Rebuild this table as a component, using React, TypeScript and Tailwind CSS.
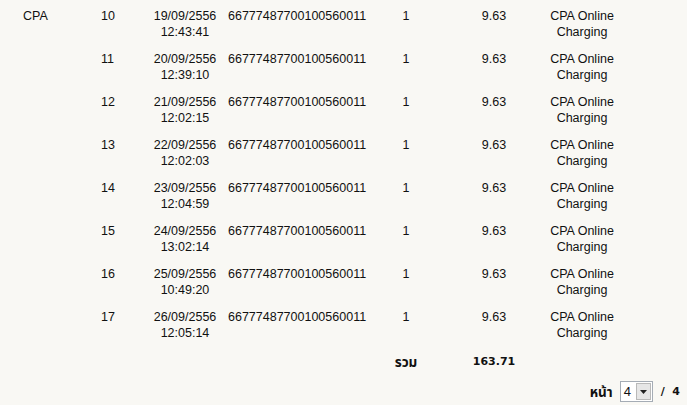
const rows = [
  { no: "10", date: "19/09/2556", time: "12:43:41" },
  { no: "11", date: "20/09/2556", time: "12:39:10" },
  { no: "12", date: "21/09/2556", time: "12:02:15" },
  { no: "13", date: "22/09/2556", time: "12:02:03" },
  { no: "14", date: "23/09/2556", time: "12:04:59" },
  { no: "15", date: "24/09/2556", time: "13:02:14" },
  { no: "16", date: "25/09/2556", time: "10:49:20" },
  { no: "17", date: "26/09/2556", time: "12:05:14" },
];

const grid = "grid grid-cols-[95px_50px_80px_145px_72px_104px_72px_1fr]";
const boldFont = { fontFamily: '"DejaVu Sans", "Noto Sans Thai", sans-serif' };

function Row({ first, no, date, time }: { first: boolean; no: string; date: string; time: string }) {
  return (
    <div className={`${grid} h-[43px] pt-[8px]`}>
      <div className="pl-[23px]">{first ? "CPA" : ""}</div>
      <div className="pl-[6px]">{no}</div>
      <div className="text-center">
        {date}
        <br />
        {time}
      </div>
      <div className="pl-[3px]">66777487700100560011</div>
      <div className="text-center">1</div>
      <div className="text-center">9.63</div>
      <div className="text-center">
        CPA Online
        <br />
        Charging
      </div>
      <div />
    </div>
  );
}

export default function App() {
  return (
    <div
      className="w-[687px] h-[405px] bg-[#f9f8f4] text-[#111] text-[12.5px] leading-[16px] overflow-hidden"
      style={{ fontFamily: '"Liberation Sans", "Noto Sans Thai", "DejaVu Sans", sans-serif' }}
    >
      {rows.map((r, i) => (
        <Row key={r.no} first={i === 0} {...r} />
      ))}
      <div className={`${grid} pt-[10px] font-bold text-[11px]`} style={boldFont}>
        <div />
        <div />
        <div />
        <div />
        <div className="text-center text-[13.5px]">รวม</div>
        <div className="text-center">163.71</div>
        <div />
        <div />
      </div>
      <div className="flex items-center justify-end pr-[7px] mt-[11px] font-bold text-[11px]" style={boldFont}>
        <span className="mr-[7px] text-[13.5px]">หน้า</span>
        <div
          className="flex items-center h-[21px] w-[33px] border border-[#a5acb5] bg-white font-normal text-[13px]"
          style={{ fontFamily: '"Liberation Sans", sans-serif' }}
        >
          <span className="pl-[3px] flex-1">4</span>
          <span className="mr-[1px] flex items-center justify-center w-[15px] h-[17px] border border-[#b9b9b9] bg-[#e6e6e6]">
            <svg width="7" height="4" viewBox="0 0 7 4">
              <path d="M0 0h7L3.5 4z" fill="#222" />
            </svg>
          </span>
        </div>
        <span className="ml-[8px] whitespace-pre">/  4</span>
      </div>
    </div>
  );
}
